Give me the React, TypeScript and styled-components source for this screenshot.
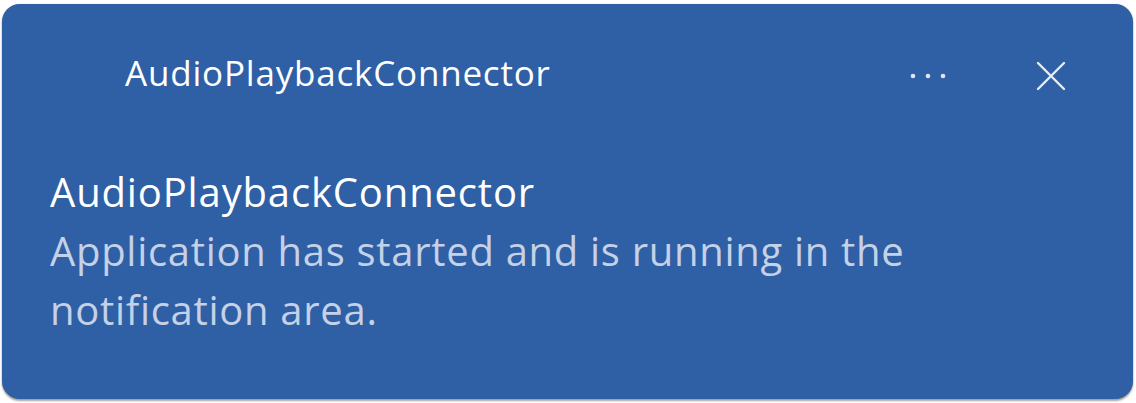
import React from "react";
import styled, { createGlobalStyle } from "styled-components";

const Global = createGlobalStyle`
  html, body { margin: 0; padding: 0; background: #ffffff; }
  body { font-family: "Open Sans", "Noto Sans", sans-serif; }
`;

const Page = styled.div`
  width: 1136px;
  height: 403px;
  padding: 4px 3px 4px 2px;
  box-sizing: border-box;
`;

const Card = styled.div`
  width: 100%;
  height: 100%;
  box-sizing: border-box;
  background: #2f5fa5;
  border-radius: 18px;
  box-shadow: 0 2px 2px rgba(90, 90, 80, 0.55), 0 0 1px rgba(90, 90, 90, 0.5);
  display: flex;
  flex-direction: column;
`;

const Header = styled.div`
  display: flex;
  align-items: center;
  height: 137px;
  padding: 0 62px 0 123px;
`;

const AppName = styled.div`
  flex: 1;
  color: #ffffff;
  font-size: 35px;
  line-height: 48px;
  letter-spacing: 0.8px;
`;

const IconButton = styled.button<{ $gap: number }>`
  background: none;
  border: 0;
  padding: 0;
  margin: 7px 0 0 ${(p) => p.$gap}px;
  display: flex;
  align-items: center;
  justify-content: center;
  width: 40px;
  height: 40px;
`;

const Body = styled.div`
  padding: 21px 40px 0 48px;
  display: flex;
  flex-direction: column;
`;

const Title = styled.div`
  color: #ffffff;
  font-size: 40px;
  line-height: 59px;
  letter-spacing: 0.85px;
`;

const Message = styled.div`
  color: #c4d1e7;
  font-size: 40px;
  line-height: 59px;
  max-width: 900px;
  letter-spacing: 0.7px;
`;

export default function App() {
  return (
    <>
      <Global />
      <Page>
        <Card>
          <Header>
            <AppName>AudioPlaybackConnector</AppName>
            <IconButton $gap={0} aria-label="More">
              <svg width="38" height="8" viewBox="0 0 38 8">
                <circle cx="4" cy="4" r="2.3" fill="#dfe6f3" />
                <circle cx="19" cy="4" r="2.3" fill="#dfe6f3" />
                <circle cx="34" cy="4" r="2.3" fill="#dfe6f3" />
              </svg>
            </IconButton>
            <IconButton $gap={83} aria-label="Close">
              <svg width="32" height="32" viewBox="0 0 32 32">
                <path d="M3 3 L29 29 M29 3 L3 29" stroke="#e6ecf6" strokeWidth="2.4" strokeLinecap="round" />
              </svg>
            </IconButton>
          </Header>
          <Body>
            <Title>AudioPlaybackConnector</Title>
            <Message>Application has started and is running in the notification area.</Message>
          </Body>
        </Card>
      </Page>
    </>
  );
}
